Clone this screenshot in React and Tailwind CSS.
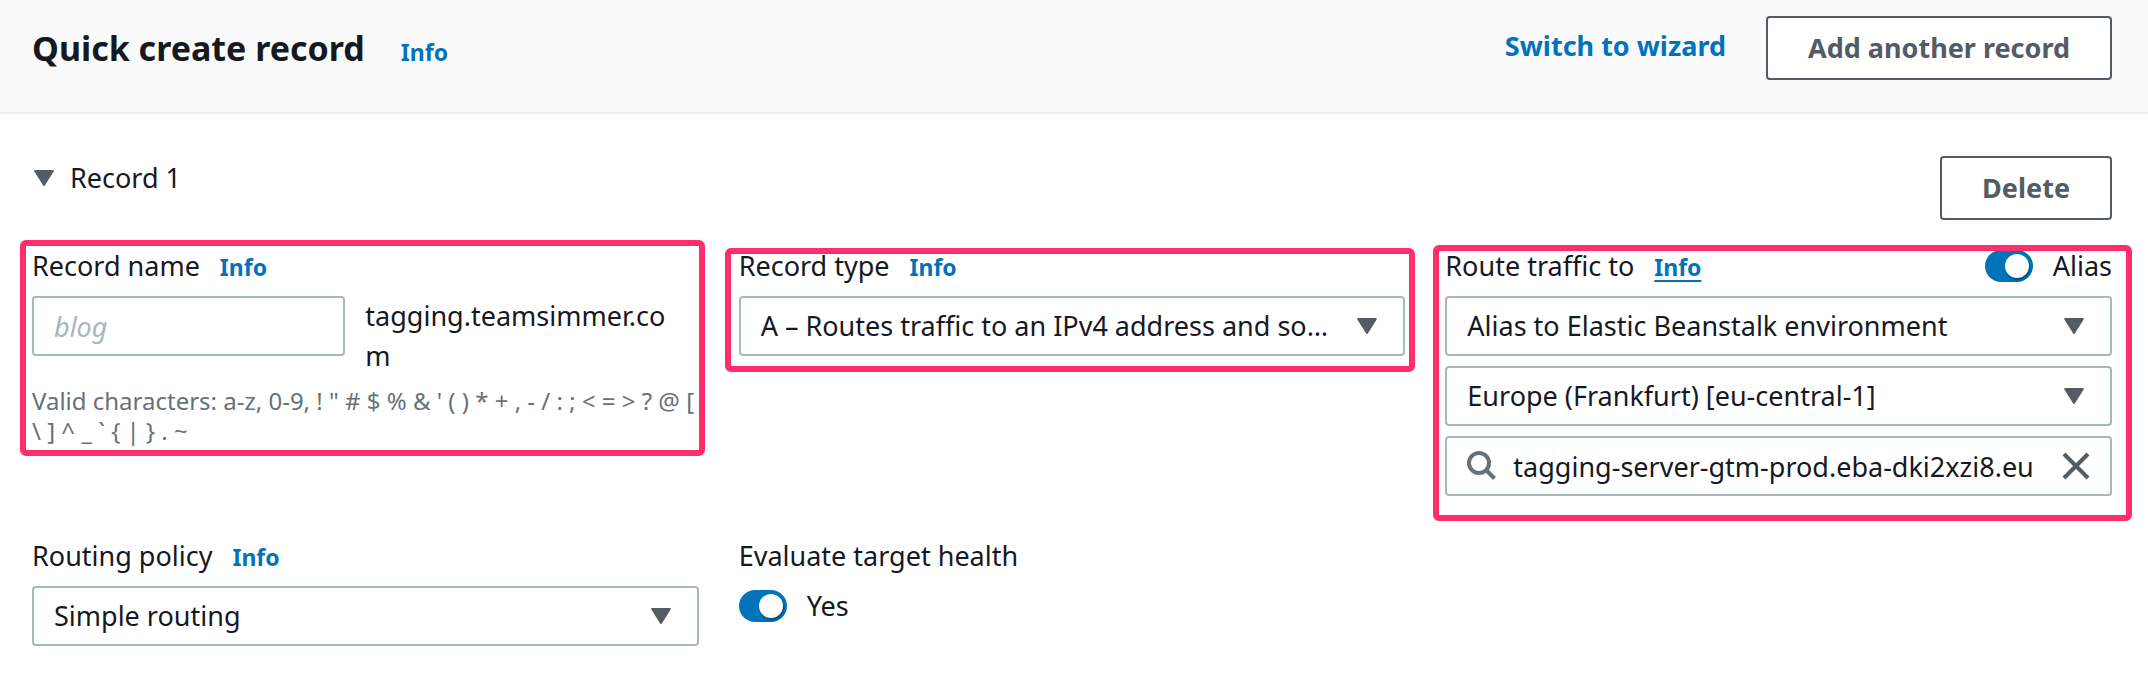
import { useState } from "react";

function InfoLink({ label, underline }) {
  return (
    <a
      href="#info"
      aria-label={label + " info"}
      className={
        underline
          ? "text-[23px] leading-8 font-bold text-[#0073bb] underline decoration-2 underline-offset-4"
          : "text-[23px] leading-8 font-bold text-[#0073bb]"
      }
    >
      Info
    </a>
  );
}

function Caret({ className = "" }) {
  return (
    <svg viewBox="0 0 20 16" aria-hidden="true" className={"h-4 w-5 shrink-0 " + className}>
      <path d="M1.2 1h17.6L10 15z" fill="#545b64" stroke="#545b64" strokeWidth="2" strokeLinejoin="round" />
    </svg>
  );
}

function Frame({ className }) {
  return (
    <div
      aria-hidden="true"
      className={"pointer-events-none absolute rounded-md border-6 border-[#fe2e6c] " + className}
    />
  );
}

function Select({ id, label, value }) {
  return (
    <div className="relative flex items-center">
      <select
        id={id}
        aria-label={label}
        className="h-15 w-full appearance-none truncate rounded border-2 border-[#aab7b8] bg-white pl-5 pr-16"
      >
        <option>{value}</option>
      </select>
      <Caret className="pointer-events-none absolute right-7" />
    </div>
  );
}

function Toggle({ label }) {
  const [on, setOn] = useState(true);
  return (
    <label className="flex items-center gap-5">
      <span className="relative flex h-8 w-12 shrink-0">
        <input
          type="checkbox"
          role="switch"
          checked={on}
          onChange={(e) => setOn(e.target.checked)}
          className="peer h-8 w-12 appearance-none rounded-full bg-[#879596] checked:bg-[#0073bb]"
        />
        <span className="pointer-events-none absolute left-1 top-1 size-6 rounded-full bg-white shadow-[1px_2px_2px_rgba(0,0,0,0.35)] peer-checked:left-5" />
      </span>
      <span>{label}</span>
    </label>
  );
}

const button =
  "h-16 rounded border-2 border-[#545b64] bg-white px-10 font-bold text-[#545b64] whitespace-nowrap";

export default function App() {
  return (
    <main className="bg-white font-['Noto_Sans',sans-serif] text-[27px] leading-10 text-[#16191f]">
      <header className="flex items-start justify-between border-b-2 border-[#eaeded] bg-[#fafafa] pt-4 pr-9 pb-8 pl-8">
        <div className="mt-2 flex items-baseline gap-9">
          <h1 className="text-[34px] leading-12 font-bold">Quick create record</h1>
          <InfoLink label="Quick create record" />
        </div>
        <div className="flex items-start gap-10">
          <a href="#wizard" className="mt-2.5 font-bold text-[#0073bb]">
            Switch to wizard
          </a>
          <button type="button" className={button}>
            Add another record
          </button>
        </div>
      </header>

      <section className="pt-[42px] pr-9 pb-12 pl-8">
        <div className="flex items-start justify-between">
          <button type="button" aria-expanded="true" className="mt-0.5 flex items-center gap-4 pl-0.5">
            <Caret />
            <span>Record 1</span>
          </button>
          <button type="button" className={button}>
            Delete
          </button>
        </div>

        <div className="mt-[26px] grid grid-cols-3 gap-10">
          <div className="relative">
            <div className="mb-2.5 flex items-baseline gap-5">
              <label htmlFor="record-name">Record name</label>
              <InfoLink label="Record name" />
            </div>
            <div className="flex gap-5">
              <input
                id="record-name"
                type="text"
                placeholder="blog"
                className="h-15 w-[47%] shrink-0 rounded border-2 border-[#aab7b8] bg-white px-5 placeholder:italic placeholder:text-[#aab7b8]"
              />
              <p className="min-w-0 pr-6 break-all">tagging.teamsimmer.com</p>
            </div>
            <p className="mt-2.5 text-[24px] leading-[30px] text-[#687078]">
              {"Valid characters: a-z, 0-9, ! \" # $ % & ' ( ) * + , - / : ; < = > ? @ [ \\ ] ^ _ ` { | } . ~"}
            </p>
            <Frame className="-top-1.5 -right-1.5 -left-3 h-54" />
          </div>

          <div className="relative">
            <div className="mb-2.5 flex items-baseline gap-5">
              <label htmlFor="record-type">Record type</label>
              <InfoLink label="Record type" />
            </div>
            <Select id="record-type" value="A – Routes traffic to an IPv4 address and some AWS resources" />
            <Frame className="top-0.5 -right-2.5 -left-3.5 h-31" />
          </div>

          <div className="relative">
            <div className="mb-2.5 flex items-center justify-between">
              <div className="flex items-baseline gap-5">
                <label htmlFor="route-target">Route traffic to</label>
                <InfoLink label="Route traffic to" underline />
              </div>
              <Toggle label="Alias" />
            </div>
            <div className="flex flex-col gap-2.5">
              <Select id="route-target" value="Alias to Elastic Beanstalk environment" />
              <Select id="route-region" label="Region" value="Europe (Frankfurt) [eu-central-1]" />
              <div className="flex h-15 items-center rounded border-2 border-[#aab7b8] bg-white pr-5 pl-5">
                <svg viewBox="0 0 30 30" aria-hidden="true" className="size-[30px] shrink-0">
                  <circle cx="12" cy="12" r="10" fill="none" stroke="#687078" strokeWidth="4" />
                  <path d="M19.5 19.5l8 8" stroke="#687078" strokeWidth="4" />
                </svg>
                <input
                  type="text"
                  aria-label="Environment"
                  defaultValue="tagging-server-gtm-prod.eba-dki2xzi8.eu"
                  className="ml-4 h-full min-w-0 flex-1 bg-transparent outline-none"
                />
                <button type="button" aria-label="Clear" className="ml-4 shrink-0">
                  <svg viewBox="0 0 28 28" aria-hidden="true" className="size-7">
                    <path d="M2 2l24 24M26 2L2 26" stroke="#545b64" strokeWidth="4" />
                  </svg>
                </button>
              </div>
            </div>
            <Frame className="-top-px -right-5 -left-3 h-69" />
          </div>

          <div>
            <div className="mb-2.5 flex items-baseline gap-5">
              <label htmlFor="routing-policy">Routing policy</label>
              <InfoLink label="Routing policy" />
            </div>
            <Select id="routing-policy" value="Simple routing" />
          </div>

          <div>
            <p className="mb-2.5">Evaluate target health</p>
            <Toggle label="Yes" />
          </div>
        </div>
      </section>
    </main>
  );
}
